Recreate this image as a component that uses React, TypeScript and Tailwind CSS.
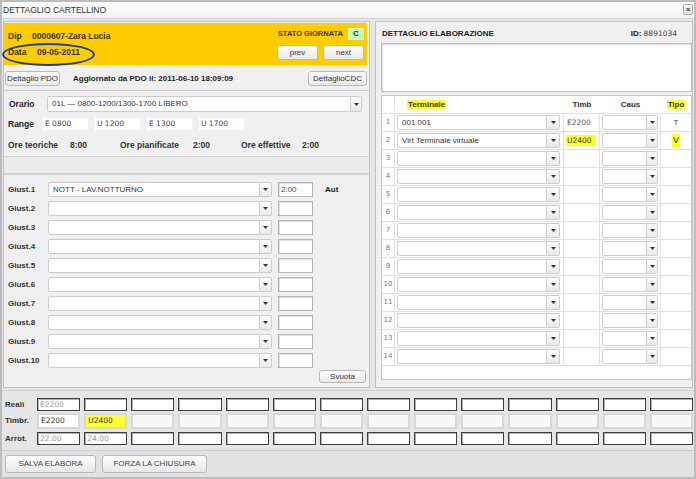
import clsx from 'clsx'

const verdana = "font-['DejaVu_Sans',sans-serif]"

function Caret() {
  return (
    <svg width="5" height="3" viewBox="0 0 5 3">
      <path d="M0 0h5L2.5 3z" fill="#333" />
    </svg>
  )
}

function Btn({ children, className }: { children: React.ReactNode; className?: string }) {
  return (
    <button
      type="button"
      className={clsx(
        'flex items-center justify-center rounded-[3px] border border-[#b9b9b9] bg-gradient-to-b from-white to-[#e8e8e8] text-[8px] text-[#333]',
        className,
      )}
    >
      {children}
    </button>
  )
}

function Combo({ className, value, arrow = 'w-[12px]' }: { className?: string; value?: string; arrow?: string }) {
  return (
    <div className={clsx('flex h-[15px]', className)}>
      <div className="flex flex-1 items-center overflow-hidden whitespace-nowrap rounded-l-[2px] border border-[#cdcdcd] bg-white pl-[4px] text-[8px] text-[#333]">
        {value}
      </div>
      <div
        className={clsx(
          'flex items-center justify-center rounded-r-[2px] border border-l-0 border-[#cdcdcd] bg-gradient-to-b from-white to-[#e9e9e9]',
          arrow,
        )}
      >
        <Caret />
      </div>
    </div>
  )
}

const terminali = [
  { t: '001 001', timb: 'E2200', tipo: 'T' },
  { t: 'Virt Terminale virtuale', timb: 'U2400', tipo: 'V', hl: true },
  ...Array.from({ length: 12 }, () => ({ t: '', timb: '', tipo: '' })),
]

const reali = ['E2200', ...Array(13).fill('')]
const timbr = ['E2200', 'U2400', ...Array(12).fill('')]
const arrot = ['22:00', '24:00', ...Array(12).fill('')]

export default function App() {
  return (
    <div className="relative h-[479px] w-[696px] overflow-hidden bg-[#bdbdbd] p-[2px] font-['Liberation_Sans',Arial,sans-serif] text-[8px] text-[#222]">
      <div className="flex h-full flex-col bg-[#e6e6e6]">
        {/* title bar */}
        <div className="flex h-[17px] items-center justify-between border-b border-[#d4d4d4] bg-gradient-to-b from-white to-[#f2f2f2] pl-[1px] pr-[1px]">
          <span className="text-[8.5px] text-[#333]">DETTAGLIO CARTELLINO</span>
          <div className="mt-[-1px] flex h-[11px] w-[10px] items-center justify-center rounded-[2px] border border-[#a8a8a8] bg-gradient-to-b from-white to-[#e4e4e4] text-[8px] font-bold leading-none text-[#333]">
            ×
          </div>
        </div>

        {/* panels */}
        <div className="flex gap-[5px] pl-[1px] pt-[2px]">
          {/* left */}
          <div className="flex h-[367px] w-[367px] flex-col border border-[#c2c2c2] bg-[#f0f0f0]">
            <div className="mr-[2px] mt-[1px] flex h-[42px] justify-between bg-[#ffcc00] pl-[4px] pr-[3px] font-bold text-[#3a3000]">
              <div className="flex flex-col pt-[5px] text-[8.5px]">
                <div className="flex h-[16px] items-center">
                  <span className="w-[24px]">Dip</span>
                  <span>0000607-Zara Lucia</span>
                </div>
                <div className="flex h-[16px] items-center">
                  <span className="w-[29px]">Data</span>
                  <span>09-05-2011</span>
                </div>
              </div>
              <div className="flex flex-col items-end pt-[5px]">
                <div className="flex h-[12px] items-center">
                  <span className="text-[7.5px]">STATO GIORNATA</span>
                  <span className="ml-[5px] flex h-[12px] w-[16px] items-center justify-center bg-[#c8f7c0] text-[8px]">C</span>
                </div>
                <div className="mt-[5px] flex gap-[5px] font-normal">
                  <Btn className="h-[15px] w-[41px]">prev</Btn>
                  <Btn className="h-[15px] w-[41px]">next</Btn>
                </div>
              </div>
            </div>

            <div className="flex h-[26px] items-start border-b border-[#cfcfcf] pt-[6px]">
              <Btn className="ml-[1px] h-[15px] w-[55px]">Dettaglio PDO</Btn>
              <span className="ml-[13px] self-center pb-[4px] font-bold">Aggiornato da PDO il: 2011-06-10 18:09:09</span>
              <Btn className="ml-auto mr-[2px] h-[15px] w-[59px]">DettaglioCDC</Btn>
            </div>

            <div className="flex h-[66px] flex-col border-b border-[#d6d6d6] pt-[5px]">
              <div className="flex items-center">
                <span className="w-[43px] pl-[5px] text-[8.5px] font-bold">Orario</span>
                <Combo className="h-[16px] w-[315px]" value="01L — 0800-1200/1300-1700 LIBERO" arrow="w-[11px]" />
              </div>
              <div className="mt-[6px] flex h-[12px] items-center">
                <span className="w-[39px] pl-[4px] text-[8.5px] font-bold">Range</span>
                <div className={clsx('flex gap-[7px] text-[7.5px] text-[#444]', verdana)}>
                  {['E 0800', 'U 1200', 'E 1300', 'U 1700'].map((r) => (
                    <span key={r} className="flex h-[12px] w-[45px] items-center bg-white pl-[2px]">
                      {r}
                    </span>
                  ))}
                </div>
              </div>
              <div className="mt-[9px] flex h-[12px] items-center text-[8.5px] font-bold text-[#333]">
                <span className="w-[66px] pl-[4px]">Ore teoriche</span>
                <span className="w-[50px]">8:00</span>
                <span className="w-[73px]">Ore pianificate</span>
                <span className="w-[48px]">2:00</span>
                <span className="w-[61px]">Ore effettive</span>
                <span>2:00</span>
              </div>
            </div>

            <div className="h-[18px] border-b-2 border-[#d3d3d3] bg-[#ececec]" />

            <div className="flex flex-1 flex-col pt-[5px]">
              {Array.from({ length: 10 }, (_, i) => (
                <div key={i} className="flex h-[19px] items-center">
                  <span className="w-[44px] pl-[4px] font-bold text-[#333]">Giust.{i + 1}</span>
                  <Combo className="w-[224px]" value={i === 0 ? 'NOTT - LAV.NOTTURNO' : ''} />
                  <div className="ml-[6px] flex h-[15px] w-[35px] items-center border border-[#b5b5b5] bg-white pl-[2px] text-[8px] text-[#444] shadow-[inset_1px_1px_0_#e0e0e0]">
                    {i === 0 ? '2:00' : ''}
                  </div>
                  {i === 0 && <span className="ml-[12px] font-bold">Aut</span>}
                </div>
              ))}
              <div className="flex justify-end pr-[3px]">
                <Btn className="h-[13px] w-[47px]">Svuota</Btn>
              </div>
            </div>
          </div>

          {/* right */}
          <div className="flex h-[367px] w-[318px] flex-col border border-[#c2c2c2] bg-[#f0f0f0]">
            <div className="flex h-[21px] items-center justify-between pl-[6px] pr-[15px] pt-[3px]">
              <span className="font-bold">DETTAGLIO ELABORAZIONE</span>
              <span>
                <span className="font-bold">ID: </span>
                <span className={clsx('text-[7.5px] text-[#444]', verdana)}>8891034</span>
              </span>
            </div>
            <div className="ml-[5px] h-[49px] w-[311px] border border-[#bcbcbc] bg-white shadow-[inset_1px_1px_1px_#ddd]" />
            <div className="ml-[5px] mt-[3px] h-[285px] w-[311px] border border-[#c8c8c8] bg-white">
              <div className="flex h-[18px] items-end border-b border-[#e0e0e0] pb-[2px] font-bold text-[#333]">
                <div className="h-full w-[13px] border-r border-[#e0e0e0]" />
                <div className="w-[169px] pl-[12px]">
                  <span className="bg-[#ffff26] px-[1px]">Terminale</span>
                </div>
                <div className="w-[36px] text-center">Timb</div>
                <div className="w-[61px] text-center">Caus</div>
                <div className="flex-1 text-center">
                  <span className="bg-[#ffff26] px-[1px]">Tipo</span>
                </div>
              </div>
              {terminali.map((r, i) => (
                <div key={i} className="flex h-[18px] border-b border-[#e0e0e0]">
                  <div className={clsx('flex w-[13px] items-center justify-center border-r border-[#e0e0e0] text-[7px] text-[#777]', verdana)}>
                    {i + 1}
                  </div>
                  <div className="flex w-[169px] items-center border-r border-[#e0e0e0] pl-[2px]">
                    <Combo className="w-[163px]" value={r.t} arrow="w-[13px]" />
                  </div>
                  <div className={clsx('flex w-[36px] items-center border-r border-[#e0e0e0] pl-[2px] text-[7.5px] text-[#555]', verdana)}>
                    {r.timb && <span className={clsx('px-[1px]', r.hl && 'bg-[#ffff26] pr-[4px] text-[#333]')}>{r.timb}</span>}
                  </div>
                  <div className="flex w-[61px] items-center border-r border-[#e0e0e0] pl-[2px]">
                    <Combo className="w-[56px]" arrow="w-[11px]" />
                  </div>
                  <div className="flex flex-1 items-center justify-center text-[8px] text-[#444]">
                    {r.tipo && <span className={clsx(r.hl && 'bg-[#ffff26] px-[1px] text-[9px] text-[#222]')}>{r.tipo}</span>}
                  </div>
                </div>
              ))}
            </div>
          </div>
        </div>

        {/* timbrature */}
        <div className="mt-[2px] flex flex-col gap-[2px] border-b border-[#cdcdcd] border-t border-t-[#d2d2d2] pb-[5px] pt-[7px]">
          <div className="flex h-[13px] items-center">
            <span className="w-[35px] pl-[3px] font-bold text-[#333]">Reali</span>
            <div className="grid w-[656px] grid-cols-[repeat(14,minmax(0,1fr))] gap-x-[4px]">
              {reali.map((v, i) => (
                <div key={i} className={clsx('flex h-[13px] items-center border border-[#3f3f3f] bg-white pl-[2px] text-[7.5px] text-[#999] shadow-[inset_1px_1px_0_#b0b0b0]', verdana)}>
                  {v}
                </div>
              ))}
            </div>
          </div>
          <div className="flex h-[16px] items-center">
            <span className="w-[35px] pl-[3px] font-bold text-[#333]">Timbr.</span>
            <div className="grid w-[656px] grid-cols-[repeat(14,minmax(0,1fr))] gap-x-[4px]">
              {timbr.map((v, i) => (
                <div
                  key={i}
                  className={clsx(
                    'flex h-[16px] items-center border-2 border-[#d8d8d8] pl-[2px] text-[7.5px] text-[#333]',
                    verdana,
                    i === 0 ? 'bg-white' : i === 1 ? 'bg-[#ffff33]' : 'bg-[#f8f8f8]',
                  )}
                >
                  {v}
                </div>
              ))}
            </div>
          </div>
          <div className="mt-[1px] flex h-[13px] items-center">
            <span className="w-[35px] pl-[3px] font-bold text-[#333]">Arrot.</span>
            <div className="grid w-[656px] grid-cols-[repeat(14,minmax(0,1fr))] gap-x-[4px]">
              {arrot.map((v, i) => (
                <div key={i} className={clsx('flex h-[13px] items-center border border-[#3f3f3f] bg-white pl-[2px] text-[7.5px] text-[#999] shadow-[inset_1px_1px_0_#b0b0b0]', verdana)}>
                  {v}
                </div>
              ))}
            </div>
          </div>
        </div>

        {/* footer */}
        <div className="flex flex-1 items-start gap-[6px] bg-[#e2e2e2] pl-[3px] pt-[4px]">
          <Btn className="h-[18px] w-[91px] text-[#444]">SALVA ELABORA</Btn>
          <Btn className="h-[18px] w-[105px] text-[#444]">FORZA LA CHIUSURA</Btn>
        </div>
      </div>

      {/* hand-drawn highlight around Data */}
      <div className="absolute left-[2px] top-[43px] h-[23px] w-[93px] rounded-[50%] border-2 border-[#1d3a9e]" />
    </div>
  )
}
